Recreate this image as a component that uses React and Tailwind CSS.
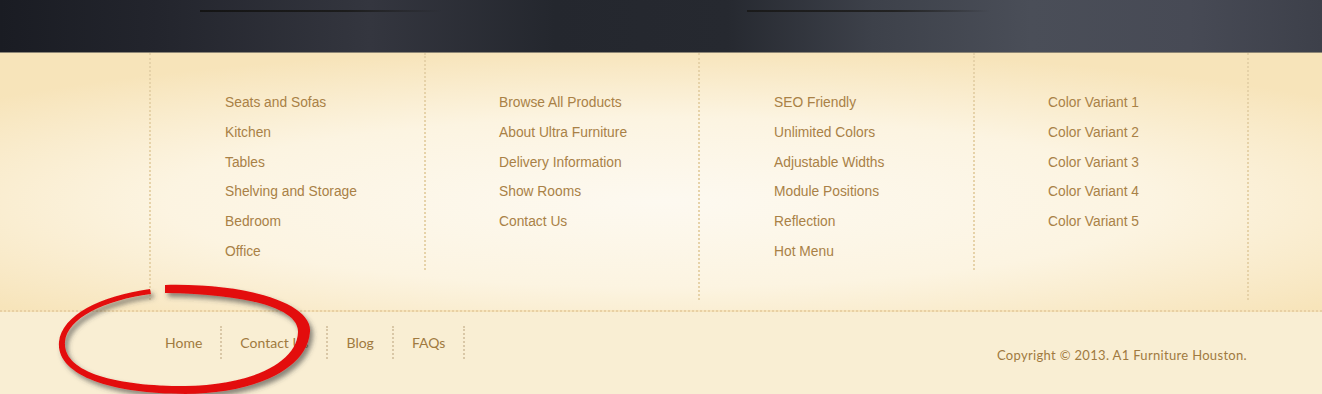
import React from 'react'

const columns = [
  ['Seats and Sofas', 'Kitchen', 'Tables', 'Shelving and Storage', 'Bedroom', 'Office'],
  ['Browse All Products', 'About Ultra Furniture', 'Delivery Information', 'Show Rooms', 'Contact Us'],
  ['SEO Friendly', 'Unlimited Colors', 'Adjustable Widths', 'Module Positions', 'Reflection', 'Hot Menu'],
  ['Color Variant 1', 'Color Variant 2', 'Color Variant 3', 'Color Variant 4', 'Color Variant 5'],
]

const colHeights = ['h-[247px]', 'h-[217px]', 'h-[247px]', 'h-[217px]']
const colWidths = ['w-[275px]', 'w-[274px]', 'w-[275px]', 'w-[274px]']
const colPads = ['pl-[74px]', 'pl-[73px]', 'pl-[74px]', 'pl-[73px]']

const navItems = ['Home', 'Contact Us', 'Blog', 'FAQs']

function RedCircle() {
  return (
    <svg
      className="absolute left-[50px] top-[280px] pointer-events-none"
      width="275"
      height="114"
      viewBox="0 0 275 114"
    >
      <defs>
        <filter id="shadow" x="-10%" y="-20%" width="130%" height="150%">
          <feDropShadow dx="3" dy="4" stdDeviation="2.5" floodColor="#3a3a3a" floodOpacity="0.6" />
        </filter>
      </defs>
      <path
        filter="url(#shadow)"
        fill="#e31010"
        d="M 115 5
           C 202 3, 263 25, 260 52
           C 257 91, 200 114, 135 114
           C 60 114, 6 95, 9 62
           C 12 35, 50 16, 100 9
           L 101 14
           C 55 20, 17 38, 15 62
           C 13 92, 65 106, 135 106
           C 195 106, 247 85, 248 52
           C 249 28, 195 14, 115 13 Z"
      />
    </svg>
  )
}

export default function App() {
  return (
    <div className="relative w-[1322px] h-[394px] overflow-hidden font-['Liberation_Sans',Arial,sans-serif]">
      {/* dark top bar */}
      <div className="h-[53px] border-b border-[#8d8676] bg-[linear-gradient(90deg,#1a1c23_0%,#23252d_12%,#34363f_28%,#24272e_42%,#262930_55%,#3d414a_66%,#4a4e58_78%,#474a55_90%,#3d404a_100%)]">
        <div className="flex pt-[10px]">
          <div className="ml-[200px] w-[242px] h-[2px] bg-[linear-gradient(90deg,#141414_0%,#1c1c1c_60%,rgba(30,30,30,0)_100%)]" />
          <div className="ml-[305px] w-[243px] h-[2px] bg-[linear-gradient(90deg,#1a1a1a_0%,#222_60%,rgba(30,30,30,0)_100%)]" />
        </div>
      </div>

      {/* link columns */}
      <div className="h-[259px] border-b-2 border-dotted border-[#e8d0a4] bg-[radial-gradient(ellipse_68%_60%_at_50%_58%,#fdf9f0_0%,#fcf4e1_55%,#f7e4ba_100%)]">
        <div className="flex items-start pl-[149px]">
          {columns.map((items, i) => (
            <div
              key={i}
              className={`${colWidths[i]} ${colHeights[i]} ${colPads[i]} border-l-2 border-dotted border-[#e6d2a8] pt-[35px] ${i === 3 ? 'relative' : ''}`}
            >
              <ul>
                {items.map((t) => (
                  <li key={t} className="text-[13.8px] leading-[29.8px] text-[#a98146]">
                    {t}
                  </li>
                ))}
              </ul>
              {i === 3 && (
                <div className="absolute right-[-2px] top-0 h-[247px] border-r-2 border-dotted border-[#e6d2a8]" />
              )}
            </div>
          ))}
        </div>
      </div>

      {/* footer */}
      <div className="h-[82px] bg-[#f9eed3] flex items-start justify-between pl-[147px] pr-[75px] font-['Lato',sans-serif]">
        <ul className="flex mt-[14px]">
          {navItems.map((t) => (
            <li
              key={t}
              className="h-[33px] px-[18px] flex items-center border-r-2 border-dotted border-[#d9c7a6] text-[14px] text-[#a07a40]"
            >
              {t}
            </li>
          ))}
        </ul>
        <div className="mt-[34px] text-[13px] text-[#a07a40] tracking-[0.32px]">
          Copyright © 2013. A1 Furniture Houston.
        </div>
      </div>

      <RedCircle />
    </div>
  )
}
